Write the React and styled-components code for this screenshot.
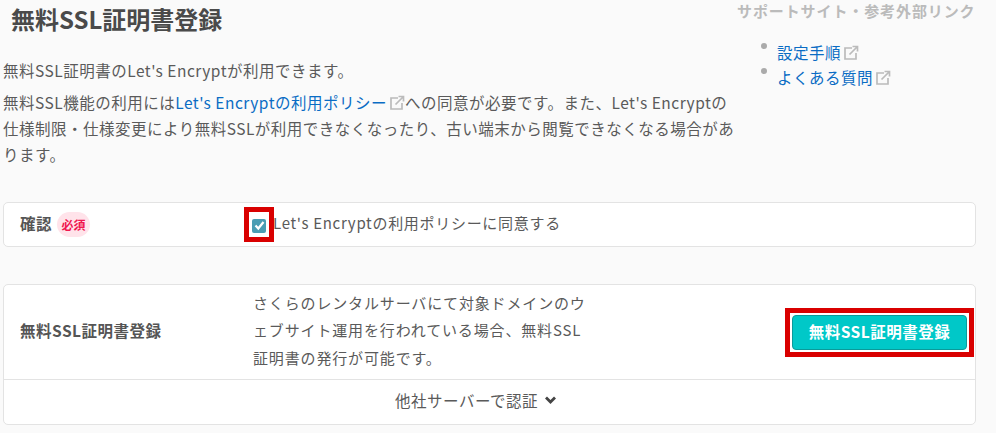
import styled, { createGlobalStyle } from "styled-components";

const GlobalStyle = createGlobalStyle`
  html, body {
    margin: 0;
    padding: 0;
    background: #fafafa;
    color: #5a5a5a;
    font-family: "Noto Sans CJK JP", "Liberation Sans", sans-serif;
  }
  body { height: 433px; overflow: hidden; }
`;

const Page = styled.div`
  width: 996px;
  padding: 0 20px 0 3px;
  box-sizing: border-box;
`;

const Top = styled.div`
  display: flex;
  justify-content: space-between;
  height: 202px;
`;

const Main = styled.div`
  width: 735px;
`;

const Title = styled.h1`
  margin: 0 0 0 8px;
  padding-top: 1px;
  font-size: 24px;
  line-height: 36px;
  font-weight: 700;
  color: #4a4a4a;
`;

const Paragraph = styled.p`
  margin: 0 0 6px;
  font-size: 15.5px;
  line-height: 26px;
  letter-spacing: 0.5px;
  color: #5a5a5a;
`;

const Intro = styled(Paragraph)`
  margin-top: 20px;
`;

const Link = styled.a`
  color: #0a6cc4;
  text-decoration: none;
`;

const Aside = styled.aside`
  width: 238px;
`;

const AsideTitle = styled.div`
  padding-top: 1px;
  font-size: 15px;
  line-height: 20px;
  font-weight: 700;
  letter-spacing: 0.9px;
  color: #bbb;
  white-space: nowrap;
  margin-left: -1px;
`;

const LinkList = styled.ul`
  list-style: none;
  margin: 19px 0 0 23px;
  padding: 0;
`;

const LinkItem = styled.li`
  position: relative;
  padding-left: 16px;
  font-size: 15.5px;
  line-height: 25px;
  letter-spacing: 0.5px;

  &::before {
    content: "";
    position: absolute;
    left: 0;
    top: 3px;
    width: 6px;
    height: 6px;
    border-radius: 50%;
    background: #aaa;
  }
`;

const ExternalSvg = styled.svg`
  width: 16px;
  height: 16px;
  margin-left: 2px;
  vertical-align: -2px;
`;

const External = () => (
  <ExternalSvg viewBox="0 0 16 16" fill="none" stroke="#bbb" strokeWidth="1.7">
    <path d="M9 3H2v11h11V8" />
    <path d="M6.5 9.5 14 2M9.5 1.5h5v5" />
  </ExternalSvg>
);

const Card = styled.section`
  background: #fff;
  border: 1px solid #e3e3e3;
  border-radius: 5px;
  box-sizing: border-box;
  width: 973px;
`;

const ConfirmCard = styled(Card)`
  display: flex;
  align-items: center;
  height: 45px;
  margin-bottom: 37px;
`;

const RowLabel = styled.div`
  display: flex;
  align-items: center;
  gap: 5px;
  flex: none;
  width: 240px;
  padding-left: 16px;
  box-sizing: border-box;
  font-size: 15.5px;
  font-weight: 700;
  letter-spacing: 0.5px;
  color: #555;
`;

const LabelText = styled.span`
  position: relative;
  top: -2px;
`;

const Required = styled.span`
  display: inline-flex;
  align-items: center;
  justify-content: center;
  width: 33px;
  height: 25px;
  border-radius: 13px;
  background: #ffe3ea;
  color: #f0164f;
  font-size: 12px;
  font-weight: 700;
  letter-spacing: 0;
`;

const Agree = styled.label`
  display: flex;
  align-items: center;
  font-size: 15px;
  letter-spacing: 0.7px;
  color: #5a5a5a;
`;

const AgreeText = styled.span`
  position: relative;
  top: -2px;
`;

const CheckFrame = styled.span`
  display: flex;
  align-items: center;
  justify-content: center;
  width: 30px;
  height: 35px;
  box-sizing: border-box;
  border: 5px solid #d90000;
  background: #fff;
  margin-right: -1px;
`;

const CheckBox = styled.span`
  display: flex;
  align-items: center;
  justify-content: center;
  width: 14px;
  height: 14px;
  margin-top: 2px;
  border-radius: 2px;
  background: #4a9db3;
`;

const RegisterRow = styled.div`
  display: flex;
  align-items: center;
  height: 94px;
  border-bottom: 1px solid #e3e3e3;
`;

const Description = styled.div`
  width: 340px;
  margin-left: 9px;
  padding-bottom: 4px;
  font-size: 15px;
  line-height: 27.5px;
  letter-spacing: 0.85px;
  color: #5a5a5a;
`;

const ButtonFrame = styled.div`
  margin-left: auto;
  margin-right: 1px;
  padding: 2px;
  border: 5px solid #d90000;
  background: #fff;
  display: flex;
`;

const Button = styled.button`
  width: 175px;
  height: 35px;
  padding: 0 0 2px;
  border: 1px solid #0a9a9a;
  border-radius: 4px;
  background: #00c8c8;
  color: #fff;
  font: 700 15.5px "Noto Sans CJK JP", sans-serif;
  letter-spacing: 0.5px;
`;

const Toggle = styled.div`
  display: flex;
  align-items: center;
  justify-content: center;
  gap: 7px;
  height: 44px;
  padding: 0 28px 4px 0;
  box-sizing: border-box;
  font-size: 15.5px;
  letter-spacing: 0.5px;
  color: #5a5a5a;
`;

export default function App() {
  return (
    <>
      <GlobalStyle />
      <Page>
        <Top>
          <Main>
            <Title>無料SSL証明書登録</Title>
            <Intro>無料SSL証明書のLet's Encryptが利用できます。</Intro>
            <Paragraph>
              無料SSL機能の利用には
              <Link href="#">Let's Encryptの利用ポリシー</Link>
              <External />
              への同意が必要です。また、Let's Encryptの仕様制限・仕様変更により無料SSLが利用できなくなったり、古い端末から閲覧できなくなる場合があります。
            </Paragraph>
          </Main>
          <Aside>
            <AsideTitle>サポートサイト・参考外部リンク</AsideTitle>
            <LinkList>
              <LinkItem>
                <Link href="#">設定手順</Link>
                <External />
              </LinkItem>
              <LinkItem>
                <Link href="#">よくある質問</Link>
                <External />
              </LinkItem>
            </LinkList>
          </Aside>
        </Top>
        <ConfirmCard>
          <RowLabel>
            <LabelText>確認</LabelText>
            <Required>必須</Required>
          </RowLabel>
          <Agree>
            <CheckFrame>
              <CheckBox>
                <svg width="11" height="11" viewBox="0 0 11 11" fill="none" stroke="#fff" strokeWidth="2.2">
                  <path d="M1.5 5.5 4.3 8.5 9.5 2" />
                </svg>
              </CheckBox>
            </CheckFrame>
            <AgreeText>Let's Encryptの利用ポリシーに同意する</AgreeText>
          </Agree>
        </ConfirmCard>
        <Card>
          <RegisterRow>
            <RowLabel>
              <LabelText>無料SSL証明書登録</LabelText>
            </RowLabel>
            <Description>
              さくらのレンタルサーバにて対象ドメインのウェブサイト運用を行われている場合、無料SSL証明書の発行が可能です。
            </Description>
            <ButtonFrame>
              <Button>無料SSL証明書登録</Button>
            </ButtonFrame>
          </RegisterRow>
          <Toggle>
            他社サーバーで認証
            <svg width="11" height="8" viewBox="0 0 11 8" fill="none" stroke="#444" strokeWidth="2.8">
              <path d="M1 1.5 5.5 6 10 1.5" />
            </svg>
          </Toggle>
        </Card>
      </Page>
    </>
  );
}
